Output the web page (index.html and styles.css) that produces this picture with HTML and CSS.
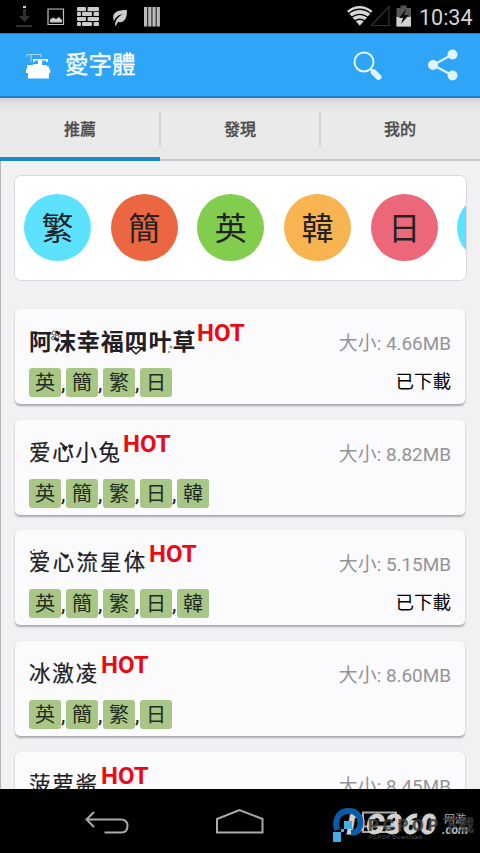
FILE: index.html
```html
<!DOCTYPE html>
<html lang="zh-Hant">
<head>
<meta charset="utf-8">
<title>愛字體</title>
<link rel="stylesheet" href="styles.css">
</head>
<body>
<div class="phone">
  <header class="status">
    <svg class="status-left" width="240" height="33" viewBox="0 0 240 33">
      <path d="M23 6h3v2h-3z" fill="#ccc"/><path d="M23 9h3v7h4l-5.500 6-5.500-6h4zM16 25h16v2H16z" fill="#303030"/>
      <path d="M48 9h15.500v15.500H48z" fill="none" stroke="#c4c4c4" stroke-width="1.200"/><path d="M50 22.500v-3l3-2 3 1.500 3-2 3 3v2.500z" fill="#ccc"/>
      <g fill="#ccc"><rect x="77" y="7" width="9" height="4.200" rx="1"/><rect x="87.500" y="7" width="11.500" height="4.200" rx="1"/><rect x="77" y="12" width="4" height="4" rx="1"/><rect x="82" y="12" width="10" height="4" rx="1"/><rect x="93.500" y="12" width="5.500" height="4" rx="1"/><rect x="77" y="17" width="9" height="4" rx="1"/><rect x="87.500" y="17" width="11.500" height="4" rx="1"/><rect x="77" y="22" width="4" height="4" rx="1"/><rect x="82" y="22" width="10" height="4" rx="1"/><rect x="93.500" y="22" width="5.500" height="4" rx="1"/></g>
      <path d="M114 21c-3-9 4-11 13-11 0 8-2 13-9 12l-2 3.500h-1c0-5 3-9 8-11.500-5 1-8 4-9 7z" fill="#ccc"/>
      <path d="M144 7h3.300v19.500H144zM148.200 7h3.300v19.500h-3.300zM152.400 7h3.300v19.500h-3.300zM156.600 7h3.300v19.500h-3.300z" fill="#bbb"/>
    </svg>
    <div class="status-right">
      <svg width="66" height="33" viewBox="346 0 66 33">
        <path d="M347 11q12.500-10 25.500 0L359.800 25.800z" fill="#d8d8d8"/>
        <path d="M348.500 13.500q11.300-8.500 22.500 0M351.500 17.300q8.300-6 16.500 0M354.500 21q5.300-3.500 10.600 0" fill="none" stroke="#000" stroke-width="1.300"/>
        <path d="M371.500 25.500h17.500V6.500z" fill="none" stroke="#343434" stroke-width="1.200"/>
        <path d="M396.500 8h4V5.500h6V8h4.500v18.500h-14.500z" fill="#555"/><path d="M396.500 17H411v9.500h-14.500z" fill="#d2d2d2"/><path d="M406 9l-7 9h4l-2 6 8-9h-4.500z" fill="#111"/>
      </svg>
      <span class="clock">10:34</span>
    </div>
  </header>
  <div class="appbar">
    <svg class="logo" width="26" height="26" viewBox="0 0 26 26">
      <path d="M2 4V1.500h14V4M6 2v7" fill="none" stroke="#a9daff"/>
      <path d="M8 9V6h15v3h-2V7.500h-4V12h5v1.500H24V16h1.200v4H24v5.500H3V20H1v-4h1v-4h6v-1h5V7.500H9.500V9z" fill="#fff"/>
    </svg>
    <h1 class="title">愛字體</h1>
    <svg class="search" width="32" height="32" viewBox="0 0 32 32"><circle cx="12" cy="12" r="9.500" fill="none" stroke="#e1f5f8" stroke-width="2"/><path d="M18.500 19l3 3" stroke="#e1f5f8" stroke-width="2.500"/><path d="M22 22.500l4.500 4.500" stroke="#e1f5f8" stroke-width="6" stroke-linecap="round"/></svg>
    <svg class="share" width="32" height="32" viewBox="0 0 32 32"><path d="M25.500 5.500L6 16l19.500 10.500" fill="none" stroke="#e1f5f8" stroke-width="2.200"/><g fill="#e1f5f8"><circle cx="25.500" cy="5.500" r="5"/><circle cx="6" cy="16" r="5"/><circle cx="25.500" cy="26.500" r="5"/></g></svg>
  </div>
  <nav class="tabs">
    <div class="tab active">推薦</div><div class="tab">發現</div><div class="tab">我的</div>
  </nav>
  <main class="content">
    <div class="langs">
      <div class="lang cyan">繁</div><div class="lang orange">簡</div><div class="lang green">英</div><div class="lang amber">韓</div><div class="lang rose">日</div><div class="lang cyan"></div>
    </div>
    <div class="list">
      <article class="card">
        <div class="info"><div class="head"><span class="name heavy">阿沫幸福四叶草<svg class="deco" width="168" height="30" viewBox="0 0 168 30"><g fill="none" stroke="#333" stroke-width=".8"><circle cx="25" cy="6" r="2"/><circle cx="28" cy="10" r="2"/><circle cx="24" cy="11" r="1.500"/></g><path d="M107 27l-4-4q-1-3 2-3l2 1.500 2-1.500q3 0 2 3z" fill="#fff" stroke="#202024" stroke-width="1.500"/><circle cx="142" cy="20" r="1.500" fill="#999"/><circle cx="140" cy="25" r="1.300" fill="#999"/></svg></span><span class="hot">HOT</span></div>
        <div class="tags"><span class="tag">英</span><i>,</i><span class="tag">簡</span><i>,</i><span class="tag">繁</span><i>,</i><span class="tag">日</span></div></div>
        <div class="meta"><span class="size">大小: 4.66MB</span><span class="done">已下載</span></div>
      </article>
      <article class="card">
        <div class="info"><div class="head"><span class="name n4">爱心小兔<svg class="deco" width="94" height="30" viewBox="0 0 94 30"><path d="M36 14l-3-4q0-3 3-1 2-2 3 0zM41 11l-2-3q1-3 3-1 3-1 2 2z" fill="#202024"/></svg></span><span class="hot">HOT</span></div>
        <div class="tags"><span class="tag">英</span><i>,</i><span class="tag">簡</span><i>,</i><span class="tag">繁</span><i>,</i><span class="tag">日</span><i>,</i><span class="tag">韓</span></div></div>
        <div class="meta"><span class="size">大小: 8.82MB</span></div>
      </article>
      <article class="card">
        <div class="info"><div class="head"><span class="name n5">爱心流星体<svg class="deco" width="120" height="30" viewBox="0 0 120 30"><g fill="#202024"><circle cx="2" cy="4" r="1"/><circle cx="5" cy="2" r=".8"/><circle cx="13" cy="3" r="1"/><circle cx="99" cy="7" r="1"/><circle cx="104" cy="3" r="1.200"/><circle cx="109" cy="5" r="1"/><path d="M37 11l-3-3q1-3 3-1 3-2 3 1zM51 9l-2-3q1-2 2 0 3-1 2 1z"/></g></svg></span><span class="hot">HOT</span></div>
        <div class="tags"><span class="tag">英</span><i>,</i><span class="tag">簡</span><i>,</i><span class="tag">繁</span><i>,</i><span class="tag">日</span><i>,</i><span class="tag">韓</span></div></div>
        <div class="meta"><span class="size">大小: 5.15MB</span><span class="done">已下載</span></div>
      </article>
      <article class="card">
        <div class="info"><div class="head"><span class="name n3">冰激凌</span><span class="hot">HOT</span></div>
        <div class="tags"><span class="tag">英</span><i>,</i><span class="tag">簡</span><i>,</i><span class="tag">繁</span><i>,</i><span class="tag">日</span></div></div>
        <div class="meta"><span class="size">大小: 8.60MB</span></div>
      </article>
      <article class="card">
        <div class="info"><div class="head"><span class="name n3">菠萝酱</span><span class="hot">HOT</span></div></div>
        <div class="meta"><span class="size">大小: 8.45MB</span></div>
      </article>
    </div>
  </main>
  <footer class="navbar">
    <svg width="480" height="64" viewBox="0 789 480 64" fill="none" stroke="#aaa" stroke-width="2">
      <path d="M94 812l-7.500 7.500 7.500 7.500M87 819.500h34q6.500 0 6.500 6.500t-6.500 6.500h-16.500"/>
      <path d="M217 832.500v-13.500l22.500-9 23 9v13.500z"/>
      <path d="M363 812.500h33v14h-33zM363 822v10h26"/>
    </svg>
    <div class="mark">
      <span class="mark-light">DC360</span><span class="mark-com">.com</span><span class="mark-net">网游</span>
      <svg class="mark-logo" width="32" height="36" viewBox="0 0 32 36"><path d="M4 22C1 8 8 3 16 3c15 0 15 22 2 22" fill="none" stroke="#0b5ba8" stroke-width="6"/><path d="M11 13h8v8h-8v3H8v10H0V24h8v-3h3z" fill="#42aee8"/></svg>
      <span class="mark-dark">PCPOP<b>下载</b></span><span class="mark-sub">PCPOP Download</span>
    </div>
  </footer>
</div>
</body>
</html>
```

FILE: styles.css
```css
* { box-sizing: border-box; }
body { margin: 0; font-family: Roboto, "Noto Sans CJK TC", sans-serif; background: #000; }
.phone { width: 480px; height: 853px; display: flex; flex-direction: column; overflow: hidden; background: #f1f0f3; }
.status { height: 33px; background: #000; display: flex; justify-content: space-between; flex: none; }
.status-right { display: flex; padding-right: 8px; gap: 7px; }
.clock { color: #d5d5d5; font-size: 21.5px; line-height: 35px; width: 53px; white-space: nowrap; }
.appbar { height: 65px; flex: none; background: #2ea5f7; border-top: 1px solid #2288cc; border-bottom: 2px solid #1b7fc4; display: flex; align-items: center; padding: 0 20px 0 25px; }
.logo { margin-top: 1px; }
.title { margin: 0 auto 0 14px; font-size: 23.5px; line-height: 62px; font-weight: 400; color: #fff; -webkit-text-stroke: .3px #fff; }
.search { margin: 1px 43px 0 0; }
.share { margin: 0 1px 0 0; }
.tabs { height: 63px; flex: none; display: flex; background: linear-gradient(#d3d2d3, #e5e4e5 6px, #ebeaeb 14px, #ebeaeb); }
.tab { flex: 1; position: relative; text-align: center; font-size: 16px; line-height: 64px; font-weight: 500; color: #4d4d4d; -webkit-text-stroke: .3px #4d4d4d; border-bottom: 2px solid #cac9cb; }
.tab + .tab::before { content: ""; position: absolute; left: -1px; top: 14px; width: 2px; height: 34px; background: #d3d2d4; }
.tab.active { border-bottom: 4px solid #1e88cc; }
.content { height: 628px; flex: none; padding: 14px 14px 0 13px; overflow: hidden; border-left: 1px solid #b5b5b7; }
.langs { height: 106px; width: 453px; border: 1px solid #dad8dd; border-radius: 7px; background: #fff; display: flex; gap: 19.7px; padding: 18px 0 0 9px; overflow: hidden; }
.lang { width: 67px; height: 67px; border-radius: 50%; flex: none; text-align: center; font-size: 32px; line-height: 71px; color: #222; }
.cyan { background: #5ce1ff; }
.orange { background: #ec6642; }
.green { background: #82cc4e; }
.amber { background: #f9b452; }
.rose { background: #eb6779; }
.list { padding: 28px 0 0 1px; display: flex; flex-direction: column; gap: 15.7px; }
.card { width: 450px; height: 95px; flex: none; background: #fbfafd; border-radius: 5px; box-shadow: 0 1.5px 2px #aaa9ad; display: flex; justify-content: space-between; padding: 0 14px; }
.info { display: flex; flex-direction: column; }
.head { height: 59px; display: flex; }
.name { position: relative; font-family: "Noto Sans CJK SC", sans-serif; color: #202024; line-height: 61px; white-space: nowrap; font-size: 21.5px; font-weight: 400; -webkit-text-stroke: .2px #202024; }
.deco { position: absolute; left: 0; top: 18px; }
.heavy { font-size: 23px; font-weight: 700; width: 168px; letter-spacing: .9px; line-height: 63px; -webkit-text-stroke: 0; }
.n4 { width: 94px; letter-spacing: 1.7px; }
.n5 { width: 120px; letter-spacing: 2.2px; }
.n3 { width: 72px; letter-spacing: 1.7px; }
.hot { font-weight: 700; font-size: 24px; line-height: 48px; color: #ea0b12; }
.tags { display: flex; height: 29px; align-items: stretch; }
.tag { width: 32px; border-radius: 3px; background: #a8c686; text-align: center; font-size: 20px; line-height: 31px; color: #222b1f; }
.tags i { width: 5px; font-style: normal; font-size: 22px; line-height: 29px; color: #222; }
.meta { text-align: right; display: flex; flex-direction: column; align-items: flex-end; white-space: nowrap; }
.size { font-size: 18.9px; line-height: 30px; margin-top: 20px; color: #949498; }
.done { font-size: 18.5px; line-height: 28px; margin-top: 9px; color: #000; }
.navbar { height: 64px; background: #000; position: relative; flex: none; }
.navbar > svg { display: block; }
.mark { position: absolute; left: 333px; top: 18px; width: 147px; height: 40px; }
.mark > * { position: absolute; white-space: nowrap; line-height: 1; }
.mark-light { left: 14px; top: 4px; font: italic 900 28px/1 Roboto, sans-serif; letter-spacing: 1.6px; color: #d2d2d2; -webkit-text-stroke: .8px #d2d2d2; }
.mark-com { left: 109px; top: 17px; font-size: 12px; font-style: italic; font-weight: 700; color: #bbb; }
.mark-net { left: 111px; top: 7px; font-size: 11px; color: #aaa; }
.mark-logo { left: 0; top: 1px; }
.mark-dark { left: 35px; top: 10px; font: 900 17px/1 Roboto, "Noto Sans CJK SC", sans-serif; letter-spacing: 3.6px; color: rgba(60, 60, 60, .85); }
.mark-dark b { font-size: 16px; letter-spacing: 0; }
.mark-sub { left: 36px; top: 27px; font-size: 6px; letter-spacing: .4px; color: #555; }
```
